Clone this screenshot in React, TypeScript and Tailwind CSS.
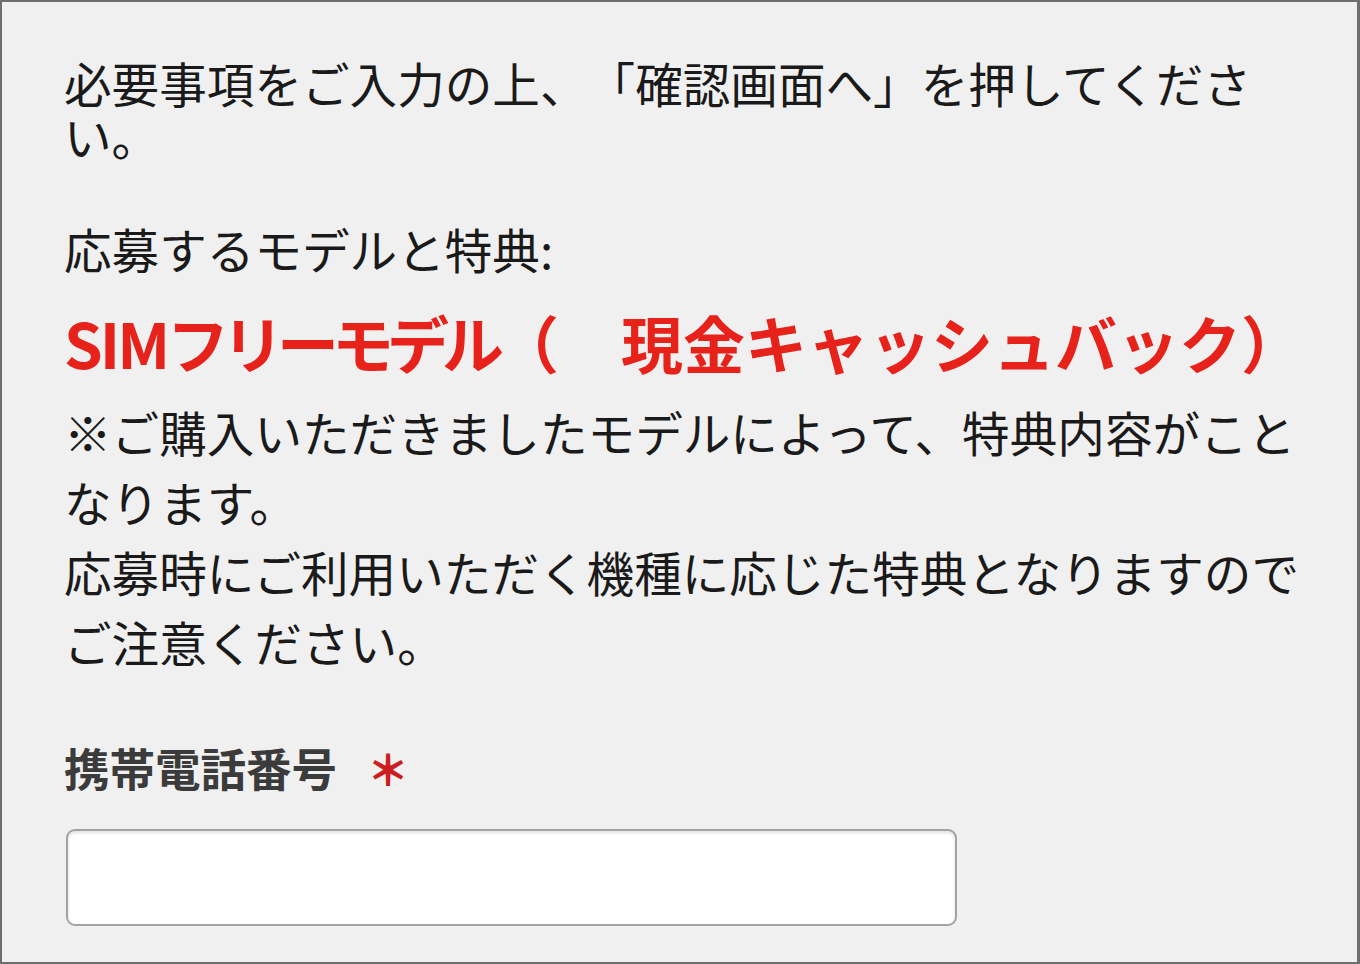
const jp = { fontFamily: '"Noto Sans CJK JP", "Noto Sans", sans-serif' };

export default function App() {
  return (
    <div
      className="h-[964px] w-[1360px] overflow-hidden border-t-2 border-b-2 border-l-2 border-r-[3px] border-[#6e6e6e] bg-[#f0f0f0] text-[#1a1a1a] [text-spacing-trim:space-all]"
      style={jp}
    >
      <div className="w-[1306px] pl-[62px] pt-[54px]">
        <p className="text-[47.6px] leading-[53px]">
          必要事項をご入力の上、「確認画面へ」を押してください。
        </p>

        <p className="mt-[60px] text-[47.6px] leading-[53px]">応募するモデルと特典:</p>

        <p className="mt-[32px] whitespace-nowrap text-[62px] font-bold leading-[70px] text-[#e6221a]">
          <span className="tracking-[-3px]">SIM</span>
          <span className="tracking-[-7px]">フリーモデル</span>
          <span className="mr-[76px] tracking-[-14px]">（</span>
          現金キャッシュバック）
        </p>

        <p className="mt-[20px] text-[47.6px] leading-[70px]">
          ※ご購入いただきましたモデルによって、特典内容がことなります。
          <br />
          応募時にご利用いただく機種に応じた特典となりますのでご注意ください。
        </p>

        <div className="mt-[64px] flex items-center leading-[53px]">
          <span className="text-[45.5px] font-bold text-[#3b3b3b]">携帯電話番号</span>
          <span className="ml-[30px] text-[42px] font-black text-[#cc1e22]">＊</span>
        </div>

        <input
          type="text"
          className="mt-[35px] ml-[2px] block h-[97px] w-[891px] rounded-[9px] border-2 border-[#a3a3a3] bg-white shadow-[inset_0_2px_3px_rgba(0,0,0,0.12)] outline-none"
        />
      </div>
    </div>
  );
}
